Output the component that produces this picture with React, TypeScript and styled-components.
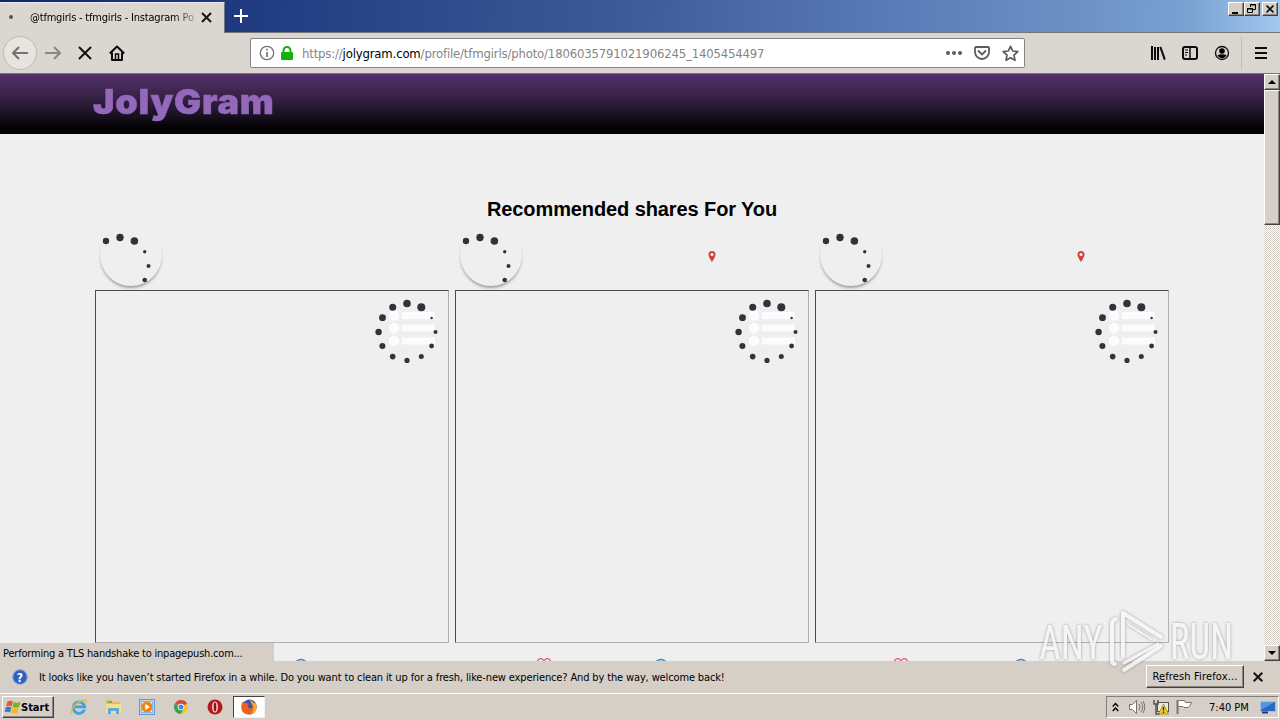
import React from "react"
import styled, {createGlobalStyle, css} from "styled-components"

const chrome = "#dad7d1"
const panel = "#d5cfc7"
const uiFont = `"DejaVu Sans Condensed", "DejaVu Sans", sans-serif`

const GlobalStyle = createGlobalStyle`
  * {
    box-sizing: border-box;
  }
  body {
    margin: 0;
    overflow: hidden;
    background: #efefef;
  }
  svg {
    display: block;
    flex: none;
  }
`

const raised = css`
  background: ${panel};
  border: 1px solid;
  border-color: #fff #45423e #45423e #fff;
  box-shadow: inset -1px -1px 0 #8b8780;
`

const Screen = styled.div`
  position: relative;
  width: 1280px;
  height: 720px;
  display: flex;
  flex-direction: column;
  overflow: hidden;
  font-family: ${uiFont};
  font-stretch: condensed;
  font-size: 11px;
  color: #000;
`

const Label = styled.span<{$spacing?: number; $size?: number; $color?: string; $bold?: boolean}>`
  white-space: pre;
  font-size: ${props => props.$size ?? 11}px;
  letter-spacing: ${props => props.$spacing ?? 0}px;
  color: ${props => props.$color ?? "#000"};
  font-weight: ${props => (props.$bold ? 700 : 400)};
`

const TitleBar = styled.div`
  display: flex;
  height: 33px;
  flex: none;
  background: linear-gradient(91deg, #0e276c 0%, #213b81 20%, #3e5c98 50%, #5b7cb7 70%, #6e92c6 85%, #7ba2d2 93%, #a2c8ef 100%);
  border-bottom: 1px solid #77777a;
`

const Tab = styled.div`
  display: flex;
  align-items: center;
  width: 225px;
  height: 31px;
  margin-top: 2px;
  padding-left: 9px;
  background: ${chrome};
  border-top: 1px solid #efede9;
  border-right: 1px solid #70747f;
`

const TabDot = styled.i`
  width: 4px;
  height: 4px;
  border-radius: 50%;
  margin-top: -2px;
  background: #555;
`

const TabTitle = styled.div`
  width: 168px;
  margin-left: 17px;
  margin-top: -1px;
  line-height: 16px;
  mask-image: linear-gradient(90deg, #000 143px, transparent 172px);
`

const NewTab = styled.div`
  display: flex;
  align-items: center;
  padding-left: 9px;
`

const WindowButtons = styled.div`
  display: flex;
  margin: 2px 2px 0 auto;
`

const WindowButton = styled.div<{$gap?: number}>`
  ${raised}
  width: 16px;
  height: 14px;
  margin-left: ${props => props.$gap ?? 0}px;
  display: flex;
  align-items: center;
  justify-content: center;
`

const NavBar = styled.div`
  display: flex;
  align-items: center;
  height: 41px;
  flex: none;
  background: ${chrome};
  border-bottom: 1px solid #78747a;
  padding-left: 3px;
`

const BackButton = styled.div`
  width: 34px;
  height: 34px;
  border-radius: 50%;
  border: 1px solid #bdb9b4;
  background: #e7e4df;
  display: flex;
  align-items: center;
  justify-content: center;
`

const NavButton = styled.div`
  width: 32px;
  display: flex;
  justify-content: center;
`

const UrlBar = styled.div`
  display: flex;
  align-items: center;
  width: 775px;
  height: 30px;
  margin-left: 117px;
  padding-left: 8px;
  background: #fff;
  border: 1px solid #858585;
  border-radius: 2px;
`

const UrlText = styled.div`
  margin-left: 7px;
  margin-top: 2px;
  width: 638px;
  line-height: 18px;
`

const UrlAction = styled.div`
  width: 28px;
  display: flex;
  justify-content: center;
`

const Tools = styled.div`
  display: flex;
  align-items: center;
  margin-left: 117px;
`

const ToolDivider = styled.div`
  width: 1px;
  height: 32px;
  margin: 0 3px;
  background: #bfbbb5;
`

const Viewport = styled.div`
  position: relative;
  display: flex;
  height: 587px;
  flex: none;
`

const Page = styled.main`
  width: 1264px;
  height: 587px;
  overflow: hidden;
  background: #efefef;
`

const SiteHeader = styled.header`
  height: 60px;
  padding: 6px 0 0 93px;
  background: linear-gradient(180deg, #53316c 0%, #3a2349 35%, #1c1426 65%, #050306 88%, #000 100%);
`

const SiteName = styled.div`
  display: inline-block;
  font: 900 34px/44px Inter, "Liberation Sans", sans-serif;
  letter-spacing: 0.7px;
  color: #9468ba;
  -webkit-text-stroke: 0.5px #9468ba;
  transform: scaleX(1.06);
  transform-origin: 0 0;
`

const Heading = styled.h2`
  margin: 0;
  padding-top: 63px;
  height: 96px;
  text-align: center;
  font: bold 20px/24px "Liberation Sans", Arial, sans-serif;
  letter-spacing: -0.1px;
`

const Cards = styled.div`
  display: grid;
  grid-template-columns: repeat(3, 354px);
  column-gap: 6px;
  margin-left: 95px;
`

const CardTop = styled.div`
  display: flex;
  height: 60px;
`

const Avatar = styled.div`
  width: 62px;
  height: 62px;
  margin: -6px 0 0 5px;
  border-radius: 50%;
  box-shadow: 0 3px 3px -1px rgba(0, 0, 0, 0.32), 0 1px 2px rgba(0, 0, 0, 0.06);
`

const Pin = styled.div<{$offset: number}>`
  margin: 21px 0 0 ${props => props.$offset}px;
`

const Photo = styled.div`
  height: 353px;
  border: 1px solid;
  border-color: #4c4c4c #b0b0b0 #b0b0b0 #4c4c4c;
  padding: 7px 0 0 277px;
`

const CardFooter = styled.div`
  display: flex;
  padding-top: 15px;
`

const Heart = styled.div<{$offset: number}>`
  margin-left: ${props => props.$offset}px;
  width: 16px;
`

const Comment = styled.div<{$gap: number}>`
  margin-left: ${props => props.$gap}px;
`

const ScrollBar = styled.div`
  display: flex;
  flex-direction: column;
  width: 16px;
  background: repeating-conic-gradient(#fff 0 25%, #d5cfc7 0 50%) 0 0 / 2px 2px;
`

const ScrollButton = styled.div`
  ${raised}
  height: 16px;
  display: flex;
  align-items: center;
  justify-content: center;
`

const ScrollThumb = styled.div`
  ${raised}
  height: 135px;
  margin-bottom: auto;
`

const StatusPanel = styled.div`
  position: absolute;
  left: 0;
  bottom: 0;
  width: 274px;
  height: 18px;
  padding-left: 3px;
  line-height: 21px;
  background: ${panel};
`

const Notice = styled.div`
  display: flex;
  align-items: center;
  height: 33px;
  flex: none;
  padding-left: 12px;
  background: ${panel};
  border-bottom: 1px solid #fff;
`

const NoticeText = styled.div`
  width: 1118px;
  padding-left: 11px;
`

const RefreshButton = styled.div`
  ${raised}
  width: 98px;
  height: 23px;
  margin-right: 9px;
  margin-top: -2px;
  text-align: center;
  line-height: 21px;
  u {
    text-underline-offset: 1px;
  }
`

const TaskBar = styled.div`
  display: flex;
  align-items: center;
  height: 26px;
  flex: none;
  padding: 0 2px;
  background: ${panel};
`

const StartButton = styled.div`
  ${raised}
  display: flex;
  align-items: center;
  width: 52px;
  height: 22px;
  padding-left: 2px;
  margin-right: 8px;
`

const Launcher = styled.div`
  width: 34px;
  display: flex;
  justify-content: center;
`

const ActiveTask = styled.div`
  width: 32px;
  height: 22px;
  margin-left: 1px;
  display: flex;
  align-items: center;
  justify-content: center;
  background: #fff;
  border: 1px solid;
  border-color: #45423e #f5f3f0 #f5f3f0 #45423e;
`

const Tray = styled.div`
  display: flex;
  align-items: center;
  width: 173px;
  height: 22px;
  margin-left: auto;
  margin-right: -1px;
  padding-left: 5px;
  border: 1px solid;
  border-color: #827e78 #fff #fff #827e78;
`

const TrayItem = styled.div<{$gap: number}>`
  margin-left: ${props => props.$gap}px;
`

const Watermark = styled.div`
  position: absolute;
  left: 1030px;
  top: 602px;
`

// [x, y, radius]
const spinnerDots = [
  [34, 5.5, 3.8],
  [48.3, 9.3, 4],
  [58.6, 20, 1.2],
  [62.5, 34, 2],
  [58.6, 48, 2.4],
  [48.3, 58.6, 2.5],
  [34, 62.4, 2.6],
  [19.7, 58.6, 2.8],
  [9.4, 48, 3],
  [5.6, 34, 3.2],
  [9.5, 19.7, 3.4],
  [19.7, 9.3, 3.5]
]

const avatarDots = [
  [6, 17, 3.2],
  [20, 13.5, 3.7],
  [34.4, 17, 3.8],
  [44.7, 27.7, 1.7],
  [48.5, 42, 2],
  [44.7, 56, 2.3]
]

const PhotoSpinner = () => (
  <svg width="68" height="68">
    {[17.5, 30, 43].map(y => (
      <g key={y} fill="#fcfcfe">
        <circle cx="21" cy={y} r="5.3" />
        <rect x="29" y={y - 3.5} width="33" height="7" />
      </g>
    ))}
    {spinnerDots.map(([x, y, r]) => (
      <circle key={`${x}-${y}`} cx={x} cy={y} r={r} fill="#32323c" />
    ))}
  </svg>
)

const AvatarSpinner = () => (
  <svg width="62" height="62">
    {avatarDots.map(([x, y, r]) => (
      <circle key={`${x}-${y}`} cx={x} cy={y} r={r} fill="#32323e" />
    ))}
  </svg>
)

type CardProps = {
  pinOffset?: number
  heartOffset: number
}

const Card = ({pinOffset, heartOffset}: CardProps) => (
  <section>
    <CardTop>
      <Avatar>
        <AvatarSpinner />
      </Avatar>
      {pinOffset && (
        <Pin $offset={pinOffset}>
          <svg width="8" height="11" viewBox="0 0 8 11">
            <path d="M4 0a3.500 3.500 0 0 0-3.500 3.500C.5 6 4 11 4 11s3.500-5 3.500-7.500A3.500 3.500 0 0 0 4 0z" fill="#cb4639" />
            <circle cx="4" cy="3.500" r="1.500" fill="#fff" />
          </svg>
        </Pin>
      )}
    </CardTop>
    <Photo>
      <PhotoSpinner />
    </Photo>
    <CardFooter>
      <Heart $offset={heartOffset}>
        <svg width="16" height="15" viewBox="0 0 16 15" fill="none" stroke="#df5775" strokeWidth="1.200">
          <path d="M8 14 2 7.500C-1 4 3 .6 4.600.6 6.500.6 8 2.500 8 3.500 8 2.500 9.500.6 11.400.6 13 .6 17 4 14 7.500z" />
        </svg>
      </Heart>
      <Comment $gap={183 - heartOffset}>
        <svg width="14" height="14" viewBox="0 0 14 14" fill="none" stroke="#3f83bd" strokeWidth="1.400">
          <circle cx="7" cy="7.500" r="6" />
        </svg>
      </Comment>
    </CardFooter>
  </section>
)

const Arrow = ({flip}: {flip?: boolean}) => (
  <svg width="16" height="14" viewBox="0 0 16 14" fill="none" stroke={flip ? "#8b8883" : "#74716e"} strokeWidth="2">
    <path d={flip ? "M0 7h15M9 1l6 6-6 6" : "M16 7H1M7 1 1 7l6 6"} />
  </svg>
)

const Cross = ({size, width = 2}: {size: number; width?: number}) => (
  <svg width={size} height={size} viewBox="0 0 10 10" stroke="#111" strokeWidth={(width * 10) / size}>
    <path d="M.7.7l8.600 8.600M9.300.7.7 9.300" />
  </svg>
)

const App = () => (
  <Screen>
    <GlobalStyle />
    <TitleBar>
      <Tab>
        <TabDot />
        <TabTitle>
          <Label $spacing={-0.2}>@tfmgirls - tfmgirls - Instagram Po</Label>
        </TabTitle>
        <svg width="17" height="13" viewBox="0 0 17 13" stroke="#151515" strokeWidth="2">
          <path d="m4 1 9 9M13 1l-9 9" />
        </svg>
      </Tab>
      <NewTab>
        <svg width="15" height="15" stroke="#fff" strokeWidth="2">
          <path d="M7 0v14M0 7h14" />
        </svg>
      </NewTab>
      <WindowButtons>
        <WindowButton>
          <svg width="10" height="9">
            <rect x="1" y="7" width="6" height="2" />
          </svg>
        </WindowButton>
        <WindowButton>
          <svg width="10" height="10" fill="none" stroke="#000">
            <path d="M3.500 3V.500h5v5H6M3 1h6M.500 4.500h5v4h-5zM0 5h6" />
          </svg>
        </WindowButton>
        <WindowButton $gap={2}>
          <Cross size={8} width={1.6} />
        </WindowButton>
      </WindowButtons>
    </TitleBar>

    <NavBar>
      <BackButton>
        <Arrow />
      </BackButton>
      <NavButton>
        <Arrow flip />
      </NavButton>
      <NavButton>
        <Cross size={14} />
      </NavButton>
      <NavButton>
        <svg width="16" height="16" viewBox="0 0 16 16" fill="none" stroke="#0c0c0c" strokeWidth="2">
          <path d="M.8 8.500 8 1.500l7.200 7M3 7.500V15h10V7.500" strokeLinejoin="round" />
          <path d="M6.500 14V9h3v5" strokeWidth="1.500" />
        </svg>
      </NavButton>
      <UrlBar>
        <svg width="16" height="16" fill="none" stroke="#737373" strokeWidth="1.300">
          <circle cx="8" cy="8" r="6.700" />
          <path d="M8 7v5M8 3.700v1.700" strokeWidth="1.700" />
        </svg>
        <svg width="20" height="16" viewBox="0 0 20 16">
          <path d="M8.500 8V5.500a3.500 3.500 0 0 1 7 0V8" fill="none" stroke="#12b20b" strokeWidth="2" />
          <rect x="6" y="7" width="12" height="8" rx="1" fill="#12b20b" />
        </svg>
        <UrlText>
          <Label $size={13} $spacing={-0.17} $color="#858585">
            https://
          </Label>
          <Label $size={13} $spacing={-0.17}>
            jolygram.com
          </Label>
          <Label $size={13} $spacing={-0.17} $color="#858585">
            /profile/tfmgirls/photo/1806035791021906245_1405454497
          </Label>
        </UrlText>
        <UrlAction>
          <svg width="16" height="4" fill="#5c5c5c">
            <circle cx="2" cy="2" r="2" />
            <circle cx="8" cy="2" r="2" />
            <circle cx="14" cy="2" r="2" />
          </svg>
        </UrlAction>
        <UrlAction>
          <svg width="16" height="14" viewBox="0 0 16 14" fill="none" stroke="#5c5c5c" strokeWidth="1.800">
            <path d="M2 1h12a1 1 0 0 1 1 1v4a7 7 0 0 1-14 0V2a1 1 0 0 1 1-1z" />
            <path d="m4.500 5 3.500 3.500L11.500 5" strokeLinecap="round" />
          </svg>
        </UrlAction>
        <UrlAction>
          <svg width="17" height="17" viewBox="0 0 17 17" fill="none" stroke="#5c5c5c" strokeWidth="1.700" strokeLinejoin="round">
            <path d="m8.500 1.300 2.200 4.700 5.100.6-3.800 3.500 1 5.200-4.500-2.600L4 15.300l1-5.200L1.200 6.600 6.300 6z" />
          </svg>
        </UrlAction>
      </UrlBar>
      <Tools>
        <NavButton>
          <svg width="16" height="14" viewBox="0 0 16 14" stroke="#0c0c0c" strokeWidth="2">
            <path d="M2 0v14M5 1v13M8 1v13" />
            <path d="m10.300.8 4.500 12.800" />
          </svg>
        </NavButton>
        <NavButton>
          <svg width="16" height="14" viewBox="0 0 16 14" fill="none" stroke="#0c0c0c" strokeWidth="2">
            <rect x="1" y="1" width="14" height="12" rx="2" />
            <path d="M8 1v12" strokeWidth="1.500" />
            <path d="M3 4h3M3 6.500h3M3 9h2" strokeWidth="1" />
          </svg>
        </NavButton>
        <NavButton>
          <svg width="16" height="16" viewBox="0 0 16 16">
            <circle cx="8" cy="8" r="6.500" fill="none" stroke="#0c0c0c" strokeWidth="1.300" />
            <circle cx="8" cy="6" r="2.800" />
            <path d="M3.500 10Q8 8.500 12.500 10 11 13.200 8 13.200T3.500 10z" />
          </svg>
        </NavButton>
        <ToolDivider />
        <NavButton>
          <svg width="12" height="12" stroke="#0c0c0c" strokeWidth="2">
            <path d="M0 1h12M0 6h12M0 11h12" />
          </svg>
        </NavButton>
      </Tools>
    </NavBar>

    <Viewport>
      <Page>
        <SiteHeader>
          <SiteName>JolyGram</SiteName>
        </SiteHeader>
        <Heading>Recommended shares For You</Heading>
        <Cards>
          <Card heartOffset={80} />
          <Card pinOffset={186} heartOffset={81} />
          <Card pinOffset={195} heartOffset={78} />
        </Cards>
      </Page>
      <ScrollBar>
        <ScrollButton>
          <svg width="8" height="4">
            <path d="m0 4 4-4 4 4z" />
          </svg>
        </ScrollButton>
        <ScrollThumb />
        <ScrollButton>
          <svg width="8" height="4">
            <path d="m0 0 4 4 4-4z" />
          </svg>
        </ScrollButton>
      </ScrollBar>
      <StatusPanel>
        <Label $spacing={-0.2}>Performing a TLS handshake to inpagepush.com...</Label>
      </StatusPanel>
    </Viewport>

    <Notice>
      <svg width="16" height="16">
        <circle cx="8" cy="8" r="7.300" fill="#2b5fc4" stroke="#8fa6d4" strokeWidth="1.200" />
        <text x="8" y="12.500" textAnchor="middle" fill="#fff" fontSize="12" fontWeight="700">
          ?
        </text>
      </svg>
      <NoticeText>
        <Label $spacing={-0.137}>
          It looks like you haven’t started Firefox in a while. Do you want to clean it up for a fresh, like-new experience? And by the way,
          welcome back!
        </Label>
      </NoticeText>
      <RefreshButton>
        <Label $spacing={0.15}>
          R<u>e</u>fresh Firefox...
        </Label>
      </RefreshButton>
      <Cross size={10} width={2} />
    </Notice>

    <TaskBar>
      <StartButton>
        <svg width="16" height="16" viewBox="0 0 16 16">
          <path d="M2.500 2.500Q5.500.8 8 2.500L6.700 7.500Q4 6 1 7.500z" fill="#e65a28" />
          <path d="M8.800 3Q12 4.500 15.500 2.800L14 8Q11 9.300 7.500 7.900z" fill="#74b52c" />
          <path d="M.8 8.300Q3.500 7 6.400 8.400L5 13.300Q2.300 12-.5 13.300z" fill="#3679d2" />
          <path d="M7.200 8.900Q10.500 10.200 13.700 8.900L12.300 14Q9 15.300 5.900 13.800z" fill="#f5b91d" />
        </svg>
        <Label $bold>Start</Label>
      </StartButton>
      <Launcher>
        <svg width="18" height="18" viewBox="0 0 18 18" fill="none">
          <path d="M14.500 11.500A5.700 5.700 0 1 1 14.700 8.800H5" stroke="#3ba4e4" strokeWidth="2.800" />
          <path d="M2 15.500C-.5 12 6 4 13 2q4-1 3.200 2.500" stroke="#e8b935" strokeWidth="1.400" />
        </svg>
      </Launcher>
      <Launcher>
        <svg width="17" height="16" viewBox="0 0 17 16">
          <path d="M1 1h5l1 2h8v11H1z" fill="#e3bf5c" />
          <path d="M3 2h4v2H3z" fill="#6db06a" />
          <path d="M1 5h15v9H1z" fill="#f7e08c" />
          <path d="M3 15V9h11v6h-3v-3H6v3z" fill="#5fa9dc" />
        </svg>
      </Launcher>
      <Launcher>
        <svg width="16" height="16">
          <rect x=".5" y=".5" width="15" height="15" fill="#b9d5f0" stroke="#5d9bd8" />
          <rect x="2.500" y="2.500" width="11" height="11" fill="#e5f0fa" stroke="#8ab7e2" />
          <circle cx="8" cy="8" r="5.500" fill="#f08517" />
          <path d="M6.300 5v6L11 8z" fill="#fff" />
        </svg>
      </Launcher>
      <Launcher>
        <svg width="14" height="14" viewBox="0 0 14 14">
          <path d="M7 7V0a7 7 0 0 1 0 14z" fill="#f6c52b" />
          <path d="M7 7 13.100 3.500A7 7 0 0 0 .9 3.500z" fill="#dc4a38" />
          <path d="M7 7 .9 3.500A7 7 0 0 0 6.500 14L10 8.800z" fill="#35a351" />
          <circle cx="7" cy="7" r="3.300" fill="#fff" />
          <circle cx="7" cy="7" r="2.500" fill="#4688e8" />
        </svg>
      </Launcher>
      <Launcher>
        <svg width="16" height="16">
          <circle cx="8" cy="8" r="7.500" fill="#b5191c" />
          <ellipse cx="8" cy="8" rx="2.900" ry="5.500" fill="#f3e5e3" />
          <ellipse cx="8" cy="8" rx="1.400" ry="4.500" fill="#8a1417" />
        </svg>
      </Launcher>
      <ActiveTask>
        <svg width="16" height="16" viewBox="0 0 16 16">
          <circle cx="8.500" cy="7.500" r="7" fill="#3556b5" />
          <path d="M2 2Q3 4 4.500 4q2 0 3.500 1L6.500 6.500Q7 10 10 9.500 12.500 8.500 10.500 5.500L9 1Q12 2 13 4.500L14 3.500Q17 8 14.500 12 12 16 7.500 15.800 1 15 .3 9 0 5 2 2z" fill="#ed611f" />
          <path d="M9 1Q12 2 13 4.500L14 3.500Q17 8 14.500 12 12.500 14.500 10 14 13.500 11 12 6.500z" fill="#fbac2c" />
        </svg>
      </ActiveTask>
      <Tray>
        <svg width="7" height="10" fill="none" stroke="#000" strokeWidth="1.400">
          <path d="m.7 4.500 2.800-3 2.800 3M.7 9l2.800-3 2.800 3" />
        </svg>
        <TrayItem $gap={10}>
          <svg width="17" height="16" fill="none" stroke="#77746f">
            <path d="M.500 5.500h3l4-4v13l-4-4h-3z" fill="#fff" />
            <path d="M10 5q2 3 0 6M12 3q3.500 5 0 10M14 2q3.500 6 0 12" />
          </svg>
        </TrayItem>
        <TrayItem $gap={7}>
          <svg width="16" height="16">
            <rect x="4.500" y="3.500" width="11" height="9" fill="#e9e9e7" stroke="#565450" />
            <path d="M1 1v4h4V1M3 5v10h4" fill="none" stroke="#565450" strokeWidth="1.500" />
            <path d="m10.500 5 5 10h-10z" fill="#f5cd22" stroke="#99770c" strokeWidth=".7" />
            <path d="M10.500 8v3.500M10.500 12.500V14" stroke="#222" strokeWidth="1.300" />
          </svg>
        </TrayItem>
        <TrayItem $gap={7}>
          <svg width="17" height="16" fill="#fff" stroke="#77746f">
            <path d="M2.500 1.500h6l1 2h6q-1 3-3.500 5h-4l-1-1h-4.500" />
            <path d="M1.500 1v14" strokeWidth="2" />
          </svg>
        </TrayItem>
        <TrayItem $gap={16}>
          <Label>7:40 PM</Label>
        </TrayItem>
        <TrayItem $gap={11}>
          <svg width="16" height="13">
            <rect x=".5" y=".5" width="15" height="10" rx="1" fill="#2868c6" stroke="#adbdd8" />
            <path d="M1 1h14L6 6 1 9z" fill="#5795e0" />
            <path d="M2 11.500h6" stroke="#1c386c" strokeWidth="2" />
          </svg>
        </TrayItem>
      </Tray>
    </TaskBar>

    <Watermark>
      <svg width="220" height="76" viewBox="0 0 220 76" fill="none">
        <defs>
          <filter id="halo" x="-10%" y="-10%" width="120%" height="120%">
            <feDropShadow dx="0" dy="0" stdDeviation="1.800" floodColor="#666" floodOpacity="0.8" />
          </filter>
        </defs>
        <g filter="url(#halo)" opacity="0.8">
          <g fill="#f7f7f7" fontFamily="Roboto, sans-serif" fontSize="49" fontWeight="400" textAnchor="middle">
            <text transform="translate(41 57) scale(0.76 1)">ANY</text>
            <text transform="translate(171.500 57) scale(0.75 1)">RUN</text>
          </g>
          <g stroke="#f7f7f7" strokeWidth="4" strokeLinejoin="round" strokeLinecap="round">
            <path d="M93 54V11l38 24" />
            <path d="M128 42 94 61" strokeWidth="3" />
            <path d="M99 23 121 37" strokeWidth="2" />
            <path d="M86 17q-4 1-4 5v36q0 4 3 4" />
            <path d="M94 68l37-24" />
          </g>
        </g>
      </svg>
    </Watermark>
  </Screen>
)

export default App
